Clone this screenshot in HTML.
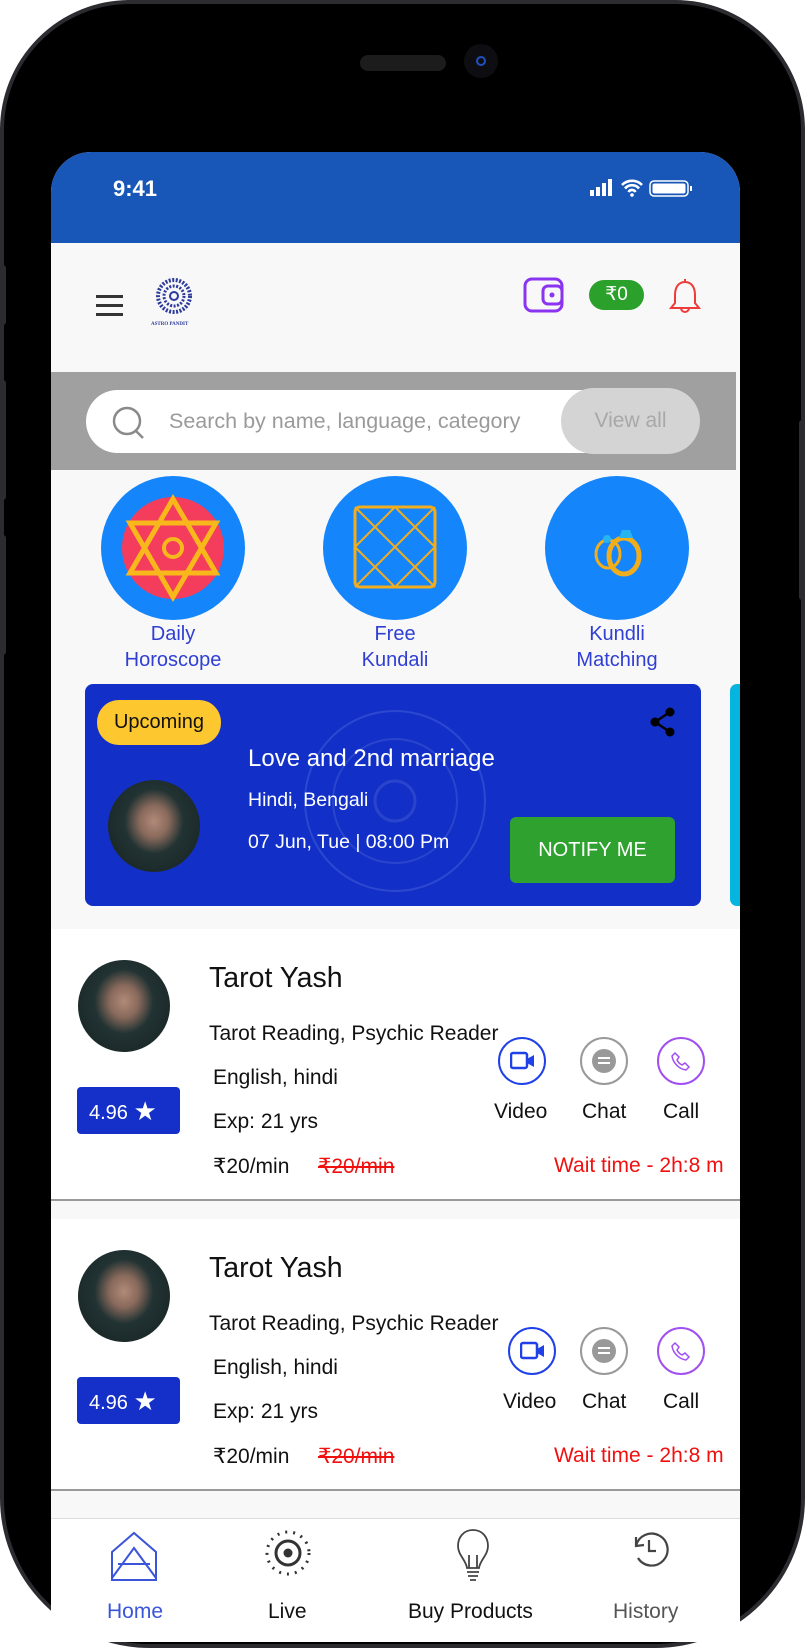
<!DOCTYPE html>
<html><head><meta charset="utf-8">
<style>
*{margin:0;padding:0;box-sizing:border-box}
body{width:805px;height:1648px;background:#fff;position:relative;overflow:hidden;font-family:"Liberation Sans",Arial,sans-serif}
.abs{position:absolute}
.phone{left:0;top:0;width:805px;height:1648px;background:#000;border-radius:130px 130px 150px 150px;border:4px solid #2b2b30}
.screen{left:51px;top:152px;width:689px;height:1490px;background:#f8f8f8;border-radius:40px 40px 0 0;overflow:hidden}
.t{position:absolute;white-space:nowrap}
.circ{position:absolute;width:144px;height:144px;border-radius:50%;background:#1585fc}
.lbl{position:absolute;color:#2f3fd2;font-size:20px;text-align:center;line-height:26px;width:160px}
.card{position:absolute;left:0;width:689px;height:272px;background:#fff;border-bottom:2px solid #9a9a9a}
.av{position:absolute;width:92px;height:92px;border-radius:50%;background:radial-gradient(ellipse at 50% 45%,#b08a78 0,#8a6a5c 22%,#233 45%,#1c2a2a 70%,#2c5a55 100%)}
.ic{position:absolute;width:48px;height:48px;border-radius:50%;border:2px solid}
</style></head><body>
<div class="abs phone"></div>
<div class="abs" style="left:0;top:265px;width:6px;height:60px;background:#2b2b30;border-radius:3px"></div>
<div class="abs" style="left:0;top:380px;width:6px;height:120px;background:#2b2b30;border-radius:3px"></div>
<div class="abs" style="left:0;top:535px;width:6px;height:120px;background:#2b2b30;border-radius:3px"></div>
<div class="abs" style="left:799px;top:420px;width:6px;height:180px;background:#2b2b30;border-radius:3px"></div>
<div class="abs" style="left:360px;top:55px;width:86px;height:16px;border-radius:8px;background:#1c1c1c"></div>
<div class="abs" style="left:464px;top:44px;width:34px;height:34px;border-radius:50%;background:#0e0e12"></div>
<div class="abs" style="left:476px;top:56px;width:10px;height:10px;border-radius:50%;border:2px solid #2050c0"></div>

<div class="abs screen">
 <div class="abs" style="left:0;top:0;width:689px;height:91px;background:#1857b8"></div>
 <div class="t" style="left:62px;top:24px;color:#fff;font-size:22px;font-weight:bold">9:41</div>
 <svg class="abs" style="left:538px;top:26px" width="125" height="20" viewBox="0 0 125 20">
  <rect x="1" y="12" width="4" height="6" fill="#fff"/><rect x="7" y="9" width="4" height="9" fill="#fff"/><rect x="13" y="5" width="4" height="13" fill="#fff"/><rect x="19" y="1" width="4" height="17" fill="#fff"/>
  <path d="M33 7a14 14 0 0 1 20 0M36 10.5a9 9 0 0 1 14 0M39.5 14a4 4 0 0 1 7 0" stroke="#fff" stroke-width="2.6" fill="none"/><circle cx="43" cy="17" r="1.8" fill="#fff"/>
  <rect x="61" y="3" width="38" height="15" rx="4" stroke="#fff" stroke-width="1.5" fill="none"/><rect x="63.5" y="5.5" width="33" height="10" rx="2" fill="#fff"/><rect x="101" y="8" width="2" height="5" fill="#fff"/>
 </svg>
 <div class="abs" style="left:45px;top:143px;width:27px;height:3px;background:#333;box-shadow:0 9px 0 #333,0 18px 0 #333"></div>
 <svg class="abs" style="left:104px;top:126px" width="38" height="40" viewBox="0 0 38 40">
  <circle cx="19" cy="18" r="16" fill="none" stroke="#2c3a9a" stroke-width="4" stroke-dasharray="2 1.5"/>
  <circle cx="19" cy="18" r="10" fill="none" stroke="#2c3a9a" stroke-width="3" stroke-dasharray="2 1.5"/>
  <circle cx="19" cy="18" r="4" fill="none" stroke="#2c3a9a" stroke-width="2"/>
 </svg>
 <div class="t" style="left:100px;top:170px;font-size:5px;color:#2c3a9a;font-family:'Liberation Serif',serif;font-weight:bold">ASTRO PANDIT</div>
 <svg class="abs" style="left:471px;top:124px" width="44" height="38" viewBox="0 0 44 38">
  <rect x="3" y="3" width="37" height="32" rx="7" fill="none" stroke="#8a33f0" stroke-width="3"/>
  <rect x="21" y="10" width="19" height="18" rx="5" fill="none" stroke="#8a33f0" stroke-width="3"/>
  <circle cx="30" cy="19" r="2.5" fill="#8a33f0"/>
 </svg>
 <div class="abs" style="left:538px;top:128px;width:55px;height:30px;border-radius:15px;background:#2ba02b;color:#fff;font-size:19px;text-align:center;line-height:30px">₹0</div>
 <svg class="abs" style="left:617px;top:124px" width="34" height="40" viewBox="0 0 34 40">
  <path d="M17 3v3M17 6c-7 0-10 6-10 13v8l-4 5h28l-4-5v-8c0-7-3-13-10-13zM13 32a4 4 0 0 0 8 0" fill="none" stroke="#f03b3b" stroke-width="2"/>
 </svg>
 <div class="abs" style="left:-3px;top:220px;width:688px;height:98px;background:#a0a0a0"></div>
 <div class="abs" style="left:35px;top:238px;width:613px;height:63px;border-radius:32px;background:#fff"></div>
 <svg class="abs" style="left:60px;top:253px" width="36" height="36" viewBox="0 0 36 36"><circle cx="16" cy="16" r="13" fill="none" stroke="#8a8a8a" stroke-width="2.5"/><path d="M25 26l7 7" stroke="#8a8a8a" stroke-width="2.5"/></svg>
 <div class="t" style="left:118px;top:257px;font-size:21.5px;color:#9a9a9a">Search by name, language, category</div>
 <div class="abs" style="left:510px;top:236px;width:139px;height:66px;border-radius:33px;background:#d4d4d4;color:#a8a8a8;font-size:21px;text-align:center;line-height:66px">View all</div>
 <div class="circ" style="left:50px;top:324px"></div>
 <svg class="abs" style="left:50px;top:324px" width="144" height="144" viewBox="0 0 144 144">
  <circle cx="72" cy="72" r="51" fill="#f43d5c"/>
  <path d="M72 23L115 97H29Z M72 121L29 47H115Z" fill="none" stroke="#f8b81c" stroke-width="5"/>
  <circle cx="72" cy="72" r="9" fill="none" stroke="#f8b81c" stroke-width="4"/>
 </svg>
 <div class="lbl" style="left:42px;top:469px">Daily<br>Horoscope</div>
 <div class="circ" style="left:272px;top:324px"></div>
 <svg class="abs" style="left:272px;top:324px" width="144" height="144" viewBox="0 0 144 144">
  <rect x="32" y="31" width="80" height="80" rx="5" fill="none" stroke="#f2ad1c" stroke-width="3"/>
  <path d="M32 71L72 31L112 71L72 111Z M32 31L112 111M112 31L32 111" fill="none" stroke="#f2ad1c" stroke-width="2"/>
 </svg>
 <div class="lbl" style="left:264px;top:469px">Free<br>Kundali</div>
 <div class="circ" style="left:494px;top:324px"></div>
 <svg class="abs" style="left:494px;top:324px" width="144" height="144" viewBox="0 0 144 144">
  <ellipse cx="63" cy="78" rx="12" ry="14" fill="none" stroke="#f2ad1c" stroke-width="3"/>
  <ellipse cx="79" cy="80" rx="15" ry="18" fill="none" stroke="#f2ad1c" stroke-width="5"/>
  <path d="M74 62l3-8h8l3 8z" fill="#27b5f0"/><circle cx="62" cy="63" r="4" fill="#27b5f0"/>
 </svg>
 <div class="lbl" style="left:486px;top:469px">Kundli<br>Matching</div>
 <div class="abs" style="left:34px;top:532px;width:616px;height:222px;border-radius:8px;background:#1230c8;overflow:hidden">
  <svg class="abs" style="left:215px;top:12px" width="190" height="210" viewBox="0 0 190 210"><circle cx="95" cy="105" r="90" fill="none" stroke="#2d48d0" stroke-width="2"/><circle cx="95" cy="105" r="62" fill="none" stroke="#2a45cc" stroke-width="2"/><circle cx="95" cy="105" r="20" fill="none" stroke="#2a45cc" stroke-width="3"/></svg>
 </div>
 <div class="abs" style="left:46px;top:548px;width:124px;height:45px;border-radius:22px;background:#fdc72f;color:#111;font-size:20px;text-align:center;line-height:45px">Upcoming</div>
 <svg class="abs" style="left:597px;top:554px" width="30" height="32" viewBox="0 0 30 32"><circle cx="22" cy="6" r="4.5" fill="#000"/><circle cx="7" cy="16" r="4.5" fill="#000"/><circle cx="22" cy="26" r="4.5" fill="#000"/><path d="M22 6L7 16L22 26" stroke="#000" stroke-width="2.5" fill="none"/></svg>
 <div class="t" style="left:197px;top:593px;color:#fff;font-size:24px">Love and 2nd marriage</div>
 <div class="t" style="left:197px;top:637px;color:#fff;font-size:19.5px">Hindi, Bengali</div>
 <div class="t" style="left:197px;top:679px;color:#fff;font-size:19.5px">07 Jun, Tue | 08:00 Pm</div>
 <div class="av" style="left:57px;top:628px"></div>
 <div class="abs" style="left:459px;top:665px;width:165px;height:66px;border-radius:6px;background:#2ea12e;color:#fff;font-size:20px;text-align:center;line-height:66px">NOTIFY ME</div>
 <div class="abs" style="left:679px;top:532px;width:14px;height:222px;border-radius:7px 0 0 7px;background:#06b4e0"></div>
 <div class="card" style="top:777px"></div>
 <div class="card" style="top:1067px"></div>
 <div class="abs" style="left:0;top:1366px;width:689px;height:124px;background:#fff;border-top:1px solid #ddd"></div>
 <svg class="abs" style="left:57px;top:1378px" width="56" height="56" viewBox="0 0 56 56"><path d="M4 22L26 3L48 22V50H4ZM4 48L26 18L48 48M10 34H42" fill="none" stroke="#3a55d8" stroke-width="2"/></svg>
 <div class="t" style="left:56px;top:1448px;font-size:21px;color:#3a55d8">Home</div>
 <svg class="abs" style="left:212px;top:1376px" width="50" height="50" viewBox="0 0 50 50"><circle cx="25" cy="25" r="21" fill="none" stroke="#333" stroke-width="3" stroke-dasharray="2 6"/><circle cx="25" cy="25" r="12" fill="none" stroke="#333" stroke-width="3"/><circle cx="25" cy="25" r="4.5" fill="#333"/></svg>
 <div class="t" style="left:217px;top:1448px;font-size:21px;color:#111">Live</div>
 <svg class="abs" style="left:404px;top:1375px" width="36" height="56" viewBox="0 0 36 56"><path d="M18 3C8 3 3 11 3 19c0 9 8 14 9 22h12c1-8 9-13 9-22C33 11 28 3 18 3zM14 41V28M22 41V28M12 45h12M13 49h10M15 53h6" fill="none" stroke="#444" stroke-width="1.8"/></svg>
 <div class="t" style="left:357px;top:1448px;font-size:21px;color:#111">Buy Products</div>
 <svg class="abs" style="left:578px;top:1375px" width="44" height="44" viewBox="0 0 44 44"><path d="M7 10L7 19L15 18M7 19A16 16 0 1 1 9 31M20 13v11h7" fill="none" stroke="#444" stroke-width="2.2"/></svg>
 <div class="t" style="left:562px;top:1448px;font-size:21px;color:#555">History</div>
</div>

<div style="position:absolute;left:0;top:0">
 <div class="av" style="left:78px;top:960px"></div>
 <div class="abs" style="left:77px;top:1087px;width:103px;height:47px;border-radius:4px;background:#1430c8;color:#fff;font-size:20px;line-height:47px;padding-left:12px">4.96 <span style="font-size:26px;position:relative;top:1px">★</span></div>
 <div class="t" style="left:209px;top:962px;font-size:28.5px;color:#111">Tarot Yash</div>
 <div class="t" style="left:209px;top:1022px;font-size:21px;color:#111">Tarot Reading, Psychic Reader</div>
 <div class="t" style="left:213px;top:1066px;font-size:21px;color:#111">English, hindi</div>
 <div class="t" style="left:213px;top:1110px;font-size:21px;color:#111">Exp: 21 yrs</div>
 <div class="t" style="left:213px;top:1154px;font-size:21px;color:#111">₹20/min</div>
 <div class="t" style="left:318px;top:1154px;font-size:21px;color:#f01010;text-decoration:line-through">₹20/min</div>
 <div class="t" style="left:554px;top:1154px;font-size:21px;color:#f01010">Wait time - 2h:8 m</div>
 <div class="ic" style="left:498px;top:1037px;border-color:#2040e8"></div>
 <svg class="abs" style="left:510px;top:1051px" width="26" height="20" viewBox="0 0 26 20"><rect x="1" y="2" width="16" height="15" rx="2" fill="none" stroke="#2040e8" stroke-width="2.5"/><path d="M17 8l7-4v12l-7-4z" fill="#2040e8"/></svg>
 <div class="ic" style="left:580px;top:1037px;border-color:#999"></div>
 <div class="abs" style="left:592px;top:1049px;width:24px;height:24px;border-radius:50%;background:#999"></div>
 <div class="abs" style="left:598px;top:1057px;width:12px;height:2px;background:#fff;box-shadow:0 5px 0 #fff"></div>
 <div class="ic" style="left:657px;top:1037px;border-color:#a050f0"></div>
 <svg class="abs" style="left:671px;top:1051px" width="20" height="20" viewBox="0 0 20 20"><path d="M4 2l4 4-2 3c1 2 3 4 5 5l3-2 4 4-3 3C8 18 2 12 1 5z" fill="none" stroke="#a050f0" stroke-width="1.5"/></svg>
 <div class="t" style="left:494px;top:1100px;font-size:21px;color:#111">Video</div>
 <div class="t" style="left:582px;top:1100px;font-size:21px;color:#111">Chat</div>
 <div class="t" style="left:663px;top:1100px;font-size:21px;color:#111">Call</div>
</div>
<div style="position:absolute;left:0;top:290px;width:805px">
 <div class="av" style="left:78px;top:960px"></div>
 <div class="abs" style="left:77px;top:1087px;width:103px;height:47px;border-radius:4px;background:#1430c8;color:#fff;font-size:20px;line-height:47px;padding-left:12px">4.96 <span style="font-size:26px;position:relative;top:1px">★</span></div>
 <div class="t" style="left:209px;top:962px;font-size:28.5px;color:#111">Tarot Yash</div>
 <div class="t" style="left:209px;top:1022px;font-size:21px;color:#111">Tarot Reading, Psychic Reader</div>
 <div class="t" style="left:213px;top:1066px;font-size:21px;color:#111">English, hindi</div>
 <div class="t" style="left:213px;top:1110px;font-size:21px;color:#111">Exp: 21 yrs</div>
 <div class="t" style="left:213px;top:1154px;font-size:21px;color:#111">₹20/min</div>
 <div class="t" style="left:318px;top:1154px;font-size:21px;color:#f01010;text-decoration:line-through">₹20/min</div>
 <div class="t" style="left:554px;top:1154px;font-size:21px;color:#f01010">Wait time - 2h:8 m</div>
 <div class="ic" style="left:508px;top:1037px;border-color:#2040e8"></div>
 <svg class="abs" style="left:520px;top:1051px" width="26" height="20" viewBox="0 0 26 20"><rect x="1" y="2" width="16" height="15" rx="2" fill="none" stroke="#2040e8" stroke-width="2.5"/><path d="M17 8l7-4v12l-7-4z" fill="#2040e8"/></svg>
 <div class="ic" style="left:580px;top:1037px;border-color:#999"></div>
 <div class="abs" style="left:592px;top:1049px;width:24px;height:24px;border-radius:50%;background:#999"></div>
 <div class="abs" style="left:598px;top:1057px;width:12px;height:2px;background:#fff;box-shadow:0 5px 0 #fff"></div>
 <div class="ic" style="left:657px;top:1037px;border-color:#a050f0"></div>
 <svg class="abs" style="left:671px;top:1051px" width="20" height="20" viewBox="0 0 20 20"><path d="M4 2l4 4-2 3c1 2 3 4 5 5l3-2 4 4-3 3C8 18 2 12 1 5z" fill="none" stroke="#a050f0" stroke-width="1.5"/></svg>
 <div class="t" style="left:503px;top:1100px;font-size:21px;color:#111">Video</div>
 <div class="t" style="left:582px;top:1100px;font-size:21px;color:#111">Chat</div>
 <div class="t" style="left:663px;top:1100px;font-size:21px;color:#111">Call</div>
</div>
</body></html>
